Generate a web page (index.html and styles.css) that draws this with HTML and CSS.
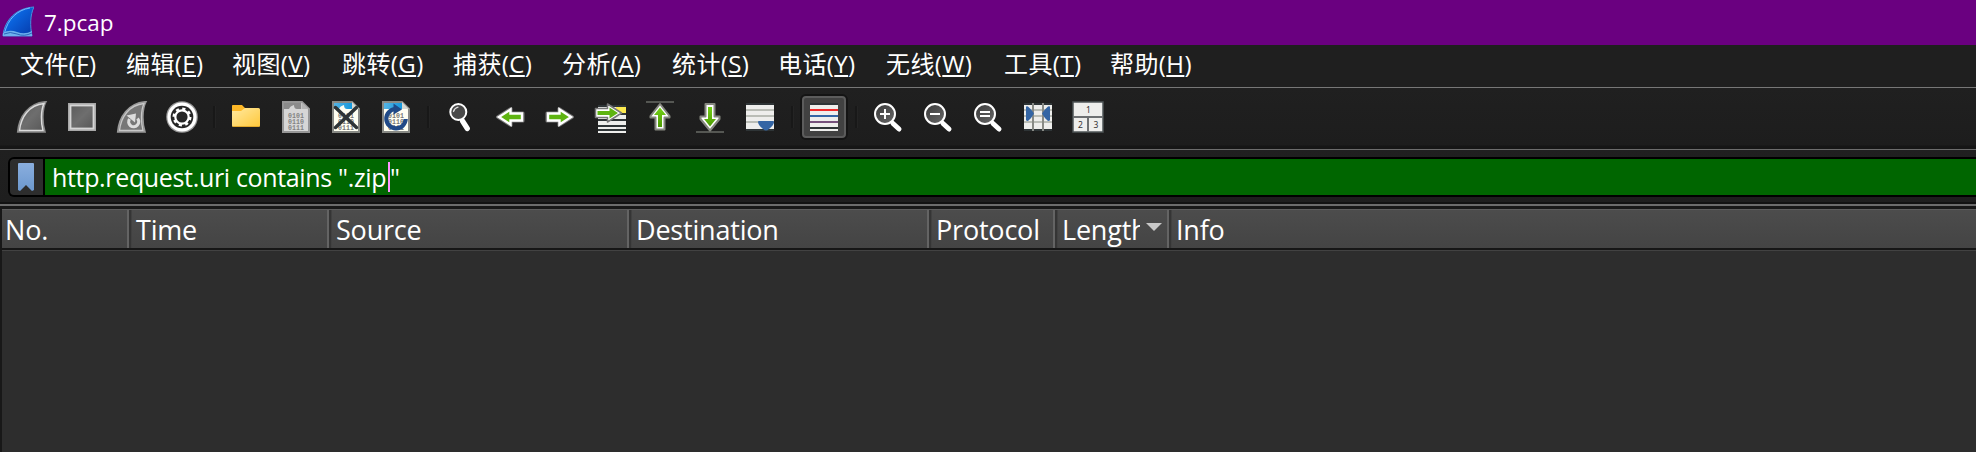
FILE: index.html
```html
<!DOCTYPE html>
<html lang="zh-CN">
<head>
<meta charset="utf-8">
<title>7.pcap</title>
<link rel="stylesheet" href="styles.css">
</head>
<body>
<svg class="defs" width="0" height="0" aria-hidden="true">
  <defs>
    <linearGradient id="blueFin" x1="0" y1="0" x2="1" y2="1"><stop offset="0" stop-color="#3d9bf5"/><stop offset=".4" stop-color="#0a62dc"/><stop offset="1" stop-color="#0638a8"/></linearGradient>
    <linearGradient id="grayFill" x1="0" y1="0" x2="1" y2="1"><stop offset="0" stop-color="#5a5a5a"/><stop offset=".5" stop-color="#6e6e6e"/><stop offset="1" stop-color="#555"/></linearGradient>
    <linearGradient id="folder" x1="0" y1="0" x2="1" y2="1"><stop offset="0" stop-color="#ffe9a0"/><stop offset="1" stop-color="#ffc83a"/></linearGradient>
    <linearGradient id="green" x1="0" y1="0" x2="0" y2="1"><stop offset="0" stop-color="#73d216"/><stop offset="1" stop-color="#4e9a06"/></linearGradient>
    <linearGradient id="sky" x1="0" y1="0" x2="1" y2="0"><stop offset="0" stop-color="#55b4e4"/><stop offset="1" stop-color="#1598dc"/></linearGradient>
    <linearGradient id="lens" x1="0" y1="0" x2="1" y2="1"><stop offset="0" stop-color="#3a3a3a"/><stop offset="1" stop-color="#686868"/></linearGradient>
    <linearGradient id="mark" x1="0" y1="0" x2="0" y2="1"><stop offset="0" stop-color="#8aaede"/><stop offset="1" stop-color="#6c98ce"/></linearGradient>
    <g id="zoomLens">
      <path d="M21 22.5 27 28" stroke="#fff" stroke-width="5" stroke-linecap="round"/>
      <circle cx="13" cy="13" r="10" fill="url(#lens)" stroke="#fff" stroke-width="2"/>
    </g>
    <g id="digits" font-family="Liberation Mono, monospace" font-size="6.6" font-weight="700" text-anchor="middle">
      <text x="16" y="17">0101</text><text x="16" y="23">0110</text><text x="16" y="29">0111</text>
    </g>
  </defs>
</svg>

<div class="window">
  <header class="titlebar">
    <svg class="app-icon" width="32" height="32" viewBox="0 0 32 32"><path d="M1 29C3 14 14 2 32 1C28 9 28 20 30 30H1Z" fill="url(#blueFin)" stroke="#4790dc"/><path d="M2.500 27C6 13 15 4 28 2" fill="none" stroke="#74b8ff"/><path d="M1 27Q7 23 15 26T30 25V30H1Z" fill="#6db0ee"/><path d="M2 28Q8 25 15 28T30 27" fill="none" stroke="#2a67bd"/></svg>
    <span class="title">7.pcap</span>
  </header>

  <nav class="menubar">
    <span>文件(<u>F</u>)</span><span>编辑(<u>E</u>)</span><span>视图(<u>V</u>)</span><span>跳转(<u>G</u>)</span><span>捕获(<u>C</u>)</span><span>分析(<u>A</u>)</span><span>统计(<u>S</u>)</span><span>电话(<u>Y</u>)</span><span>无线(<u>W</u>)</span><span>工具(<u>T</u>)</span><span>帮助(<u>H</u>)</span>
  </nav>

  <div class="toolbar">
    <div class="tool"><svg viewBox="0 0 32 32"><path d="M1.700 31C3 16 12 2 30 .700C26 8 26 22 29 31Z" fill="url(#grayFill)" stroke="#8a8a8a" stroke-width="1.600"/><path d="M3.500 29.500C5 16 13 4 28 2.500C24.500 10 25 22 27 29.500Z" fill="none" stroke="#dcdcdc" stroke-width="1.500"/></svg></div>
    <div class="tool"><svg viewBox="0 0 32 32"><rect x="3" y="3" width="26" height="26" fill="url(#grayFill)" stroke="#a8a8a8" stroke-width="2"/><rect x="4.500" y="4.500" width="23" height="23" fill="none" stroke="#d6d6d6" stroke-width="1.800"/></svg></div>
    <div class="tool"><svg viewBox="0 0 32 32"><path d="M1.700 31C3 16 12 2 30 .700C26 8 26 22 29 31Z" fill="#777" stroke="#999" stroke-width="1.600"/><path d="M3.500 29.500C5 16 13 4 28 2.500C24.500 10 25 22 27 29.500Z" fill="none" stroke="#c8c8c8" stroke-width="1.300"/><path d="M21.500 17.500A5 5 0 1 1 13.500 18" fill="none" stroke="#ddd" stroke-width="3.200"/><path d="M10.500 14.500 20 12.500 19 21.500Z" fill="#ddd"/></svg></div>
    <div class="tool"><svg viewBox="0 0 32 32"><circle cx="16" cy="16" r="15.800" fill="#999"/><circle cx="16" cy="16" r="14.600" fill="#fff"/><circle cx="16" cy="16" r="11.300" fill="#262626"/><circle cx="16" cy="16" r="8.200" fill="none" stroke="#fff" stroke-width="2.600" stroke-dasharray="3.100 3.340"/><circle cx="16" cy="16" r="6.700" fill="none" stroke="#fff" stroke-width="2.200"/></svg></div>
    <i class="sep"></i>
    <div class="tool"><svg viewBox="0 0 32 32"><path d="M2 4.500Q2 4 3 4H12L15 7H28V14H2Z" fill="#fdb827"/><path d="M2 10H11L15 7H28.500Q30 7 30 8.500V24.500Q30 26 28.500 26H3.500Q2 26 2 24.500Z" fill="url(#folder)"/><path d="M3 25.500H29" stroke="#e2a92c"/></svg></div>
    <div class="tool"><svg viewBox="0 0 32 32"><path d="M3 1H22L29 8V31H3Z" fill="#d6d6d6" stroke="#969696" stroke-width="2"/><path d="M4 2H21V8H17Q14 8 14 4Q10 5 9 8H4Z" fill="#8b8b8b"/><path d="M21.500 1V8H29Z" fill="#b4b4b4"/><use href="#digits" fill="#838383"/></svg></div>
    <div class="tool"><svg viewBox="0 0 32 32"><path d="M3 1H22L29 8V31H3Z" fill="#fffff2" stroke="#888a85" stroke-width="2"/><path d="M4 2H22V8H17Q14 8 14 4Q10 5 9 8H4Z" fill="url(#sky)"/><path d="M22 1V8H29Z" fill="#d5d7d2"/><use href="#digits" fill="#777"/><path d="M5.500 6.500 26.500 26.500M26.500 6.500 5.500 26.500" stroke="#2e3436" stroke-width="3.500" stroke-linecap="round"/></svg></div>
    <div class="tool"><svg viewBox="0 0 32 32"><path d="M3 1H22L29 8V31H3Z" fill="#fffff2" stroke="#888a85" stroke-width="2"/><path d="M4 2H22V8H4Z" fill="url(#sky)"/><path d="M22 1V8H29Z" fill="#d5d7d2"/><use href="#digits" fill="#777"/><path d="M15.500 8A9.700 9.700 0 1 0 25.700 18" fill="none" stroke="#204a87" stroke-width="4.200"/><path d="M13.500 2.500 22 8.500 13.500 13.500Z" fill="#204a87"/></svg></div>
    <i class="sep"></i>
    <div class="tool"><svg viewBox="0 0 32 32"><path d="m18.500 20 4.800 7.500" stroke="#fff" stroke-width="5.200" stroke-linecap="round"/><path d="m16.500 17 2 3" stroke="#fff" stroke-width="3"/><circle cx="14.300" cy="11" r="8" fill="#484848" stroke="#fff" stroke-width="2"/><path d="M9.500 10.500Q10.500 7 14 6.200" fill="none" stroke="#ddd" stroke-width="1.300" stroke-linecap="round"/></svg></div>
    <div class="tool"><svg viewBox="0 0 32 32"><g transform="translate(32) scale(-1 1)"><path d="M3 12H15V7.500L28.500 16 15 24.500V20H3Z" stroke="#777" stroke-width="3" stroke-linejoin="round"/><path d="M4 12.500H15.500V8.500L27 16 15.500 23.500V19.500H4Z" fill="#5eb411" stroke="#fff" stroke-width="2.400"/></g></svg></div>
    <div class="tool"><svg viewBox="0 0 32 32"><path d="M3 12H15V7.500L28.500 16 15 24.500V20H3Z" stroke="#777" stroke-width="3" stroke-linejoin="round"/><path d="M4 12.500H15.500V8.500L27 16 15.500 23.500V19.500H4Z" fill="#5eb411" stroke="#fff" stroke-width="2.400"/></svg></div>
    <div class="tool"><svg viewBox="0 0 32 32"><path d="M4 4H32V32H4Z" fill="#2e3436"/><path d="M4 6H32V12H4ZM4 14H32V18H4ZM4 20H32V24H4ZM4 26H32V28H4ZM4 30H32V32H4Z" fill="#eeeeec"/><path d="M22 6H32V12H22Z" fill="#fce94f"/><path d="M1.500 7.500H13.500V3L27.500 12 13.500 21V16.500H1.500Z" fill="#fff" stroke="#777" stroke-width="1.500" stroke-linejoin="round"/><path d="M3.500 10H15.500V6.500L24 12 15.500 17.500V14H3.500Z" fill="#5eb411"/></svg></div>
    <div class="tool"><svg viewBox="0 0 32 32"><path d="M2 1H30" stroke="#555753" stroke-width="2"/><path d="M16 3 25.500 15V16.500H20.500V28.500H11.500V16.500H6.500V15Z" fill="#fff" stroke="#85877f" stroke-width="2" stroke-linejoin="round"/><path d="M16 6.500 22 14H18V26H14V14H10Z" fill="url(#green)"/></svg></div>
    <div class="tool"><svg viewBox="0 0 32 32"><path d="M2 31H30" stroke="#555753" stroke-width="2"/><path d="M16 29.500 25.500 18V15.500H20.500V3H11.500V15.500H6.500V18Z" fill="#fff" stroke="#85877f" stroke-width="2" stroke-linejoin="round"/><path d="M16 25.500 22 18H18V6H14V18H10Z" fill="url(#green)"/></svg></div>
    <div class="tool"><svg viewBox="0 0 32 32"><path d="M2 2H30V30H2Z" fill="#2e3436"/><path d="M2 4H30V28H2Z" fill="#eeeeec"/><path d="M2 9H30M2 15H30M2 21H30" stroke="#babdb6" stroke-width="2"/><path d="M15 20H29Q30 20 30 21 30 24 25 28Q22 31 19 28 14 24 14 21 14 20 15 20Z" fill="#3465a4"/></svg></div>
    <i class="sep"></i>
    <div class="tool tool-on"><svg viewBox="0 0 32 32"><path d="M2 2H30V30H2Z" fill="#2e3436"/><path d="M2 4H30V26H2ZM2 28H30V30H2Z" fill="#eeeeec"/><path d="M2 9H30" stroke="#ef2929" stroke-width="2"/><path d="M2 15H30" stroke="#3465a4" stroke-width="2"/><path d="M2 21H30" stroke="#75507b" stroke-width="2"/></svg></div>
    <i class="sep"></i>
    <div class="tool"><svg viewBox="0 0 32 32"><use href="#zoomLens"/><path d="M8 13H18M13 8V18" stroke="#fff" stroke-width="2"/></svg></div>
    <div class="tool"><svg viewBox="0 0 32 32"><use href="#zoomLens"/><path d="M8 13H18" stroke="#fff" stroke-width="2"/></svg></div>
    <div class="tool"><svg viewBox="0 0 32 32"><use href="#zoomLens"/><path d="M8 11H18M8 15H18" stroke="#fff" stroke-width="2"/></svg></div>
    <div class="tool"><svg viewBox="0 0 32 32"><path d="M2 2H30V30H2Z" fill="#2e3436"/><path d="M2 4H30V28H2Z" fill="#eeeeec"/><path d="M2 9H30M2 15H30M2 21H30" stroke="#babdb6" stroke-width="2"/><path d="M11 2V30M21 2V30" stroke="#888a85" stroke-width="2"/><path d="M4 6Q4 5 6 5.500 9 8 12 12.500 9 18 6 20 4 20 4 19ZM28 6Q28 5 26 5.500 23 8 20 12.500 23 18 26 20 28 20 28 19Z" fill="#3465a4"/></svg></div>
    <div class="tool"><svg viewBox="0 0 32 32"><path d="M1 1H31V31H1Z" fill="#eeeeec" stroke="#4f5557" stroke-width="1.500"/><path d="M1 16H31M16 16V31" stroke="#6d7072" stroke-width="2"/><g font-family="Noto Sans, sans-serif" font-size="8.500" fill="#333" text-anchor="middle"><text x="16.500" y="11.500">1</text><text x="8.500" y="27">2</text><text x="24" y="27">3</text></g></svg></div>
  </div>

  <div class="filterbar">
    <div class="filter">
      <div class="bookmark"><svg width="16" height="28" viewBox="0 0 16 28"><path d="M0 1Q0 0 1 0H15Q16 0 16 1V27L14 28 8 22 2 28 0 27Z" fill="url(#mark)"/></svg></div>
      <div class="expression"><span class="typed">http.request.uri contains ".zip</span><i class="caret"></i><span class="quote">"</span></div>
    </div>
  </div>

  <div class="packets">
    <div class="columns">
      <div class="col first"><span>No.</span></div>
      <div class="col"><span>Time</span></div>
      <div class="col"><span>Source</span></div>
      <div class="col"><span>Destination</span></div>
      <div class="col"><span>Protocol</span></div>
      <div class="col"><span class="clipped">Length</span><i class="sort"></i></div>
      <div class="col last"><span>Info</span></div>
    </div>
    <div class="rows"></div>
  </div>
</div>
</body>
</html>
```
FILE: styles.css
```css
* { box-sizing: border-box; }
body {
  margin: 0;
  overflow: hidden;
  background: #2d2d2d;
  color: #fff;
  font-family: "Open Sans", "Noto Sans CJK SC", sans-serif;
}
.defs { position: absolute; }
.window { display: flex; flex-direction: column; width: 100%; height: 452px; }

.titlebar {
  display: flex;
  height: 45px;
  padding: 6px 0 0 2px;
  background: #6a0080;
}
.app-icon { flex: none; }
.title { margin: 2px 0 0 10px; font-size: 22.5px; line-height: 30px; }

.menubar {
  display: grid;
  grid-template-columns: 106px 106px 110px 111px 109px 110px 106px 108px 118px 106px 100px;
  height: 43px;
  padding-left: 20px;
  border-bottom: 1px solid #777;
  background: #1f1f1f;
  font-size: 24px;
  line-height: 38px;
  letter-spacing: 0.4px;
  white-space: nowrap;
}
.menubar u { text-decoration-thickness: 2px; text-underline-offset: 2px; }

.toolbar {
  display: flex;
  height: 62px;
  padding: 7px 0 0 7px;
  border-bottom: 1px solid #6c6c6c;
  background: linear-gradient(#202020, #1d1d1d 57px, #161616 58px);
}
.tool { display: flex; align-items: center; justify-content: center; width: 50px; height: 44px; }
.tool svg { width: 32px; height: 32px; }
.tool-on {
  width: 44px;
  height: 42px;
  margin: 1px 3px;
  border: 2px solid #5c5c5c;
  border-radius: 4px;
  background: #414141;
  box-shadow: 0 0 0 2px #141414;
}
.sep { width: 14px; height: 22px; margin-top: 11px; background: linear-gradient(90deg, transparent 6px, #181818 6px 8px, #242424 8px 9px, transparent 9px); }

.filterbar {
  height: 56px;
  padding: 7px 0 0 8px;
  border-bottom: 2px solid #6c6c6c;
  background: linear-gradient(#202020, #1e1e1e 52px, #121212 52px);
}
.filter {
  display: flex;
  height: 40px;
  padding: 2px 0 2px 2px;
  border-radius: 6px 0 0 6px;
  background: #000;
}
.bookmark {
  display: flex;
  justify-content: center;
  width: 33px;
  margin-right: 2px;
  padding: 4px 1px 0 0;
  border-radius: 4px 0 0 4px;
  background: #2d2d2d;
}
.expression {
  display: flex;
  flex: 1;
  align-items: center;
  padding-left: 7px;
  background: #060;
  font-size: 25px;
  line-height: 36px;
  letter-spacing: -0.34px;
  white-space: pre;
}
.typed { width: 336px; }
.caret { width: 2px; height: 30px; background: #ff96ff; }

.packets { display: flex; flex: 1; flex-direction: column; padding: 3px 0 0 2px; background: #181818; }
.columns {
  display: grid;
  grid-template-columns: 130px 200px 300px 300px 126px 114px 1fr;
  height: 42px;
  border-top: 1px solid #5d5d5d;
  border-bottom: 1px solid #424242;
  background: linear-gradient(#4c4c4c, #444 38px, #161616 38px);
  font-size: 27px;
  line-height: 40px;
  letter-spacing: -0.2px;
}
.col {
  display: flex;
  height: 40px;
  padding-left: 4px;
  white-space: nowrap;
  background: linear-gradient(270deg, #414141 1px, #353535 1px 3px, #646464 3px 5px, transparent 5px) no-repeat 0 0 / 100% 38px;
}
.first { padding-left: 3px; }
.last { background: none; }
.clipped { width: 78px; overflow: hidden; }
.sort { width: 16px; height: 8px; margin: 13px 0 0 6px; background: #c8c8c8; clip-path: polygon(0 0, 100% 0, 50% 100%); }
.rows { flex: 1; background: #2d2d2d; }
```
